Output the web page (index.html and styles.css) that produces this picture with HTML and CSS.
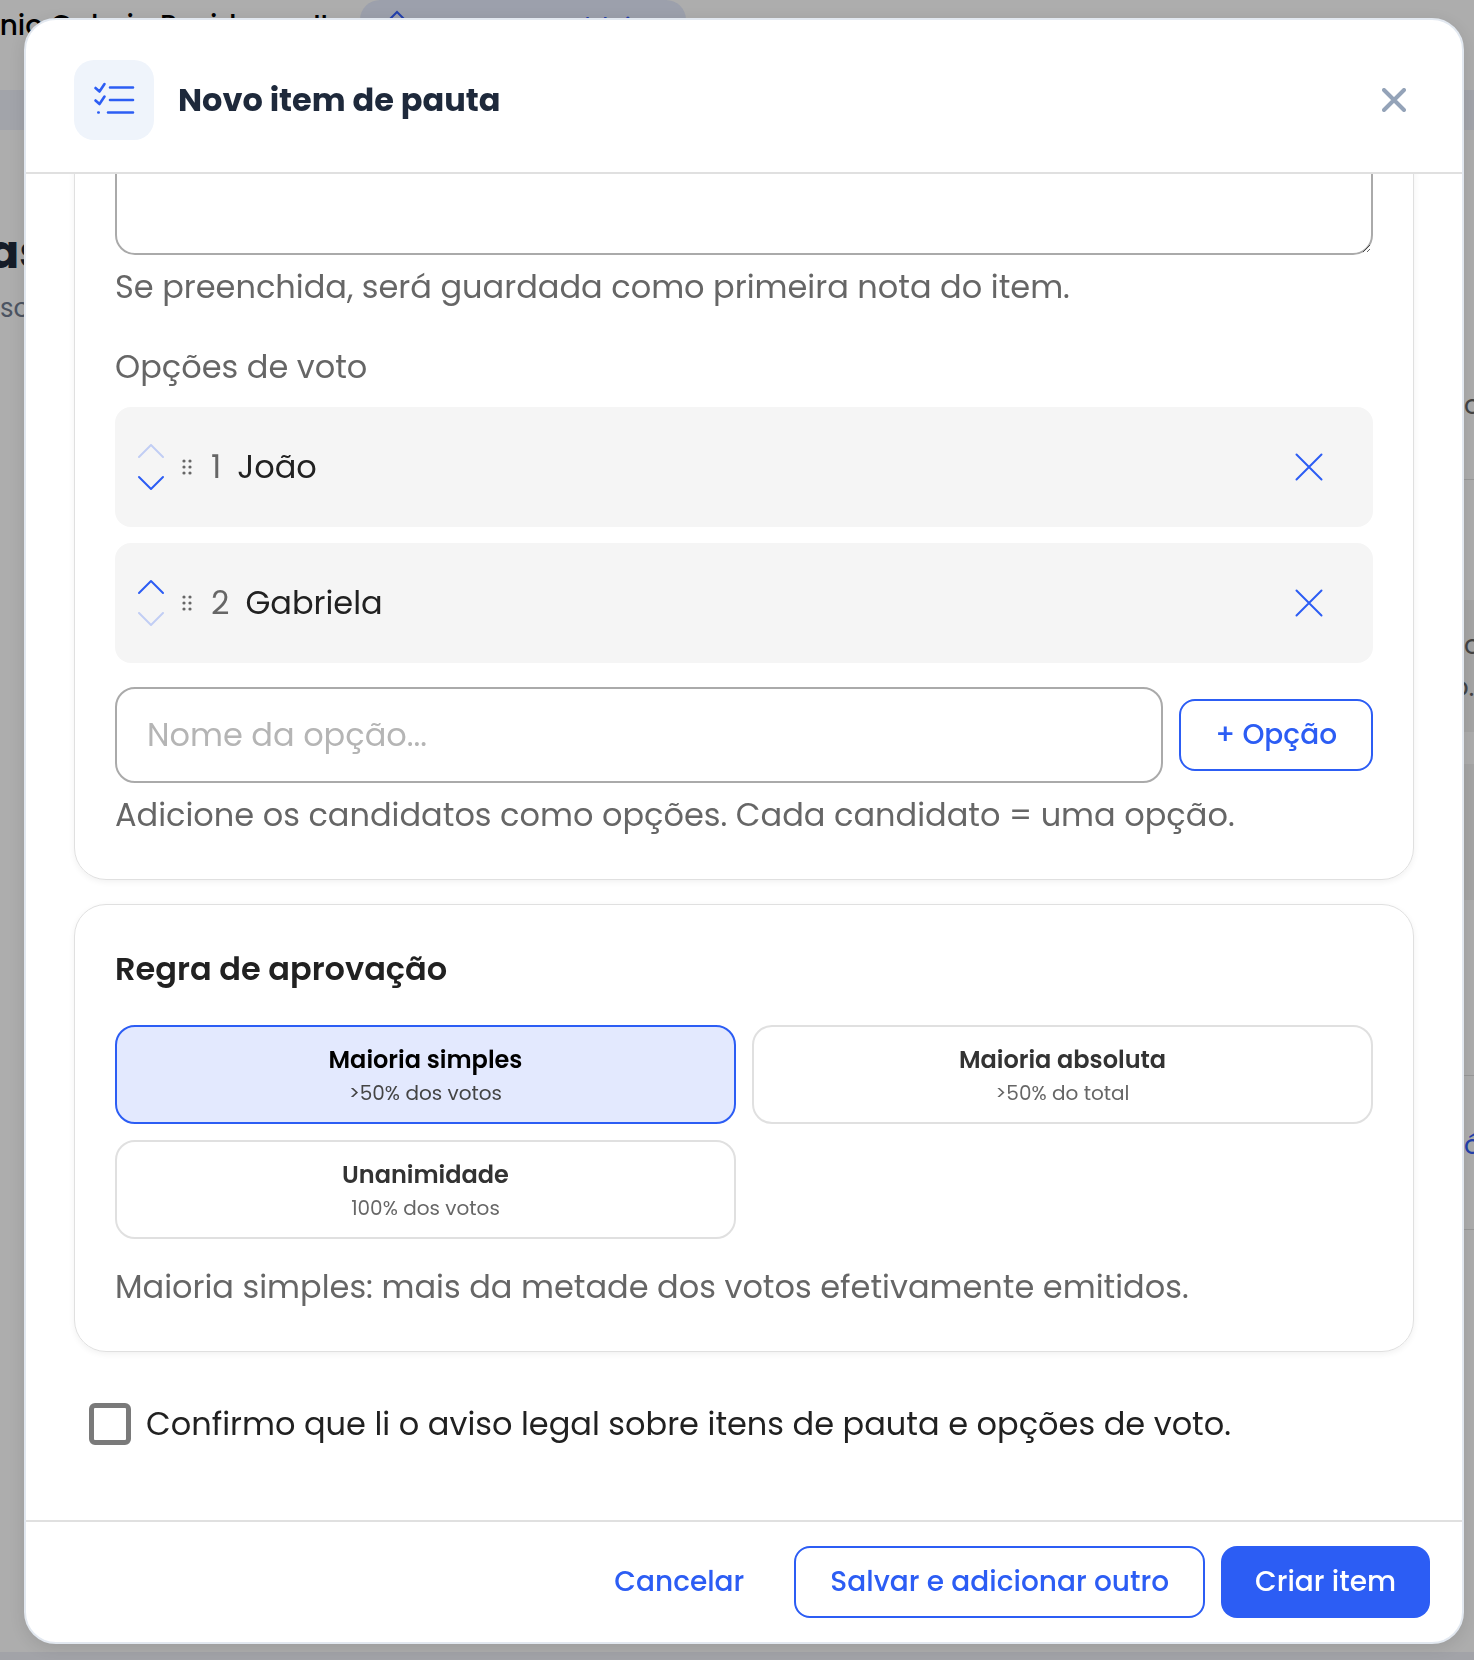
FILE: index.html
```html
<!DOCTYPE html>
<html lang="pt-BR">
<head>
<meta charset="utf-8">
<meta name="viewport" content="width=device-width, initial-scale=1">
<title>Novo item de pauta</title>
<link rel="stylesheet" href="styles.css">
</head>
<body>
<div class="page">
  <header class="topbar">
    <span class="topbar-name">ínio Galeria Residence II</span>
    <a class="topbar-chip" href="#">
      <svg width="36" height="36" viewBox="0 0 36 36" fill="none" stroke="currentColor" stroke-width="2"><path d="M3 17 18 2l15 15M8 13v20h20V13"/></svg>
      <span>Assembleias</span>
    </a>
  </header>
  <div class="band"></div>
  <div class="page-intro">
    <h1 class="page-title">as</h1>
    <p class="page-sub">sc</p>
  </div>
  <div class="page-side">
    <div class="side-cell side-first">o</div>
    <div class="side-cell side-mid"></div>
    <div class="side-cell side-shade"><p>o</p><p class="side-end">o.</p></div>
    <div class="side-cell side-gap"></div>
    <div class="side-cell side-low"></div>
    <div class="side-cell side-blank"></div>
    <div class="side-cell side-link"><a href="#">ó</a></div>
  </div>
  <div class="band-bottom"></div>
</div>

<div class="overlay">
  <form class="dialog" role="dialog" aria-labelledby="dialog-title">
    <header class="dialog-header">
      <span class="header-icon">
        <svg width="48" height="48" viewBox="0 0 48 48" fill="none" stroke="currentColor" stroke-width="2.6" stroke-linecap="round" stroke-linejoin="round"><path d="M20 11.5h23M20 24h23M18 36.500h25M5.500 12l4 3.500L14.500 8M5.500 24.500l4 3.500 5-7.500M8.300 36.500h.4"/></svg>
      </span>
      <h2 class="dialog-title" id="dialog-title">Novo item de pauta</h2>
      <button class="close" type="button" aria-label="Fechar">
        <svg width="24" height="24" viewBox="0 0 24 24" fill="none" stroke="currentColor" stroke-width="4" stroke-linecap="round"><path d="m2 2 20 20M22 2 2 22"/></svg>
      </button>
    </header>

    <div class="dialog-body">
      <section class="card">
        <textarea class="field note" aria-label="Nota"></textarea>
        <p class="hint note-hint">Se preenchida, será guardada como primeira nota do item.</p>
        <h3 class="label">Opções de voto</h3>
        <ul class="options">
          <li class="option">
            <div class="move">
              <button type="button" aria-label="Mover para cima" disabled><svg width="28" height="16" viewBox="0 0 28 16"><path d="M2 14 14 2l12 12"/></svg></button>
              <button type="button" aria-label="Mover para baixo"><svg width="28" height="16" viewBox="0 0 28 16"><path d="m2 2 12 12L26 2"/></svg></button>
            </div>
            <svg class="grip" width="16" height="16" viewBox="0 0 16 16"><circle cx="5" cy="2" r="1.6"/><circle cx="11" cy="2" r="1.6"/><circle cx="5" cy="8" r="1.6"/><circle cx="11" cy="8" r="1.6"/><circle cx="5" cy="14" r="1.6"/><circle cx="11" cy="14" r="1.6"/></svg>
            <span class="number">1</span>
            <span class="name">João</span>
            <button class="remove" type="button" aria-label="Remover João"><svg width="28" height="28" viewBox="0 0 28 28"><path d="m1.500 1.500 25 25M26.500 1.500l-25 25"/></svg></button>
          </li>
          <li class="option">
            <div class="move">
              <button type="button" aria-label="Mover para cima"><svg width="28" height="16" viewBox="0 0 28 16"><path d="M2 14 14 2l12 12"/></svg></button>
              <button type="button" aria-label="Mover para baixo" disabled><svg width="28" height="16" viewBox="0 0 28 16"><path d="m2 2 12 12L26 2"/></svg></button>
            </div>
            <svg class="grip" width="16" height="16" viewBox="0 0 16 16"><circle cx="5" cy="2" r="1.6"/><circle cx="11" cy="2" r="1.6"/><circle cx="5" cy="8" r="1.6"/><circle cx="11" cy="8" r="1.6"/><circle cx="5" cy="14" r="1.6"/><circle cx="11" cy="14" r="1.6"/></svg>
            <span class="number">2</span>
            <span class="name">Gabriela</span>
            <button class="remove" type="button" aria-label="Remover Gabriela"><svg width="28" height="28" viewBox="0 0 28 28"><path d="m1.500 1.500 25 25M26.500 1.500l-25 25"/></svg></button>
          </li>
        </ul>
        <div class="add-row">
          <input class="field add-input" type="text" placeholder="Nome da opção..." aria-label="Nome da opção">
          <button class="btn btn-outline" type="button">+ Opção</button>
        </div>
        <p class="hint">Adicione os candidatos como opções. Cada candidato = uma opção.</p>
      </section>

      <section class="card">
        <h3 class="card-title">Regra de aprovação</h3>
        <div class="rules">
          <button class="rule rule-selected" type="button" aria-pressed="true"><strong>Maioria simples</strong><span>&gt;50% dos votos</span></button>
          <button class="rule" type="button" aria-pressed="false"><strong>Maioria absoluta</strong><span>&gt;50% do total</span></button>
          <button class="rule" type="button" aria-pressed="false"><strong>Unanimidade</strong><span>100% dos votos</span></button>
        </div>
        <p class="hint">Maioria simples: mais da metade dos votos efetivamente emitidos.</p>
      </section>

      <label class="confirm"><input type="checkbox"><span>Confirmo que li o aviso legal sobre itens de pauta e opções de voto.</span></label>
    </div>

    <footer class="dialog-footer">
      <button class="btn btn-text" type="button">Cancelar</button>
      <button class="btn btn-outline" type="button">Salvar e adicionar outro</button>
      <button class="btn btn-primary" type="submit">Criar item</button>
    </footer>
  </form>
</div>
</body>
</html>
```
FILE: styles.css
```css
:root {
  --blue: #2c5df4;
  --ink: #212121;
  --muted: #666;
  --line: #e0e0e0;
}

* { box-sizing: border-box; }

body {
  margin: 0;
  height: 100vh;
  overflow: hidden;
  font-family: Poppins, Inter, sans-serif;
  font-size: 32px;
  line-height: 48px;
  color: var(--ink);
  background: #adadad;
}

h1, h2, h3, p, ul { margin: 0; padding: 0; }
ul { list-style: none; }
button, input, textarea { font: inherit; }
button { cursor: pointer; }

/* Page behind the dialog */
.page {
  display: grid;
  grid-template-columns: 1fr 24px;
  grid-template-rows: 90px 40px 1fr 8px;
  height: 100vh;
}
.topbar, .band, .band-bottom { grid-column: 1 / -1; }
.topbar {
  display: flex;
  align-items: flex-start;
  gap: 32px;
  overflow: hidden;
  white-space: nowrap;
}
.topbar-name {
  display: flex;
  justify-content: flex-end;
  width: 328px;
  font-size: 28px;
  line-height: 52px;
  font-weight: 500;
  color: #000;
}
.topbar-chip {
  display: flex;
  align-items: center;
  justify-content: space-between;
  width: 326px;
  height: 56px;
  padding: 0 24px 0 19px;
  border-radius: 20px;
  background: #9ca0ac;
  color: #2340ac;
  font-size: 26px;
  text-decoration: none;
}
.band { background: #a2a4aa; }
.band-bottom { background: #a2a3a8; }
.page-intro { padding-top: 90px; }
.page-title {
  margin-left: -12px;
  font-size: 46px;
  line-height: 64px;
  color: #151c28;
}
.page-sub {
  font-size: 26px;
  color: #4c5462;
}
.page-side {
  display: flex;
  flex-direction: column;
  padding-top: 254px;
  font-size: 26px;
  line-height: 42px;
  color: #444;
}
.side-cell { padding-left: 14px; border-bottom: 1px solid #999; }
.side-first { height: 96px; }
.side-mid { height: 120px; border: 0; }
.side-shade { height: 132px; padding-top: 24px; background: #a5a5a5; border: 0; }
.side-end { margin-left: -12px; }
.side-gap { height: 32px; border: 0; }
.side-low { height: 136px; background: #a5a5a5; border: 0; }
.side-blank { height: 176px; }
.side-link { height: 154px; padding-top: 48px; }
.side-link a { color: #2340ac; text-decoration: none; }

/* Dialog */
.overlay {
  position: fixed;
  inset: 0;
  display: flex;
  padding: 18px 10px 16px 24px;
}
.dialog {
  flex: 1;
  display: flex;
  flex-direction: column;
  overflow: hidden;
  border: 2px solid #e2e8f0;
  border-radius: 32px;
  background: #fff;
  box-shadow: 0 4px 16px rgba(0, 0, 0, .1);
}
.dialog-header {
  display: flex;
  align-items: center;
  gap: 24px;
  flex: none;
  padding: 40px 48px 32px;
  border-bottom: 2px solid var(--line);
}
.header-icon {
  display: grid;
  place-items: center;
  width: 80px;
  height: 80px;
  border-radius: 20px;
  background: #eff4fb;
  color: var(--blue);
}
.dialog-title {
  flex: 1;
  font-size: 32px;
  font-weight: 700;
  color: #1e293b;
}
.close {
  display: grid;
  place-items: center;
  width: 40px;
  height: 40px;
  padding: 0;
  border: 0;
  background: none;
  color: #94a3b8;
}

.dialog-body {
  flex: 1;
  display: flex;
  flex-direction: column;
  justify-content: flex-end;
  gap: 24px;
  min-height: 0;
  overflow: hidden;
  padding: 0 48px 48px;
}
.card {
  flex: none;
  padding: 40px;
  border: 1px solid var(--line);
  border-radius: 32px;
  box-shadow: 0 2px 6px rgba(0, 0, 0, .06);
}
.field {
  display: block;
  width: 100%;
  border: 2px solid #aaa;
  border-radius: 20px;
  background: #fff;
  color: var(--ink);
}
.note { height: 192px; padding: 24px 30px; resize: vertical; }
.hint { margin-top: 8px; color: var(--muted); }
.note-hint { margin-bottom: 32px; }
.label {
  margin-bottom: 16px;
  font-size: 32px;
  font-weight: 400;
  color: var(--muted);
}

.options { display: grid; gap: 16px; }
.option {
  display: flex;
  align-items: center;
  height: 120px;
  padding: 0 16px;
  border-radius: 16px;
  background: #f5f5f5;
}
.option button {
  display: grid;
  place-items: center;
  padding: 0;
  border: 0;
  background: none;
}
.option button svg {
  fill: none;
  stroke: var(--blue);
  stroke-width: 2;
  stroke-linecap: round;
  stroke-linejoin: round;
}
.move button { width: 40px; height: 32px; }
.move button:disabled { opacity: .25; }
.grip { margin: 0 16px 0 8px; fill: var(--muted); }
.number { margin-right: 16px; color: var(--muted); }
.name { flex: 1; }
.option .remove { width: 96px; height: 64px; }

.add-row {
  display: flex;
  align-items: center;
  gap: 16px;
  margin-top: 24px;
}
.add-input { flex: 1; min-width: 0; height: 96px; padding: 0 30px; }
.add-input::placeholder { color: #b5b5b5; }

.btn {
  height: 72px;
  padding: 0 32px;
  border: 2px solid transparent;
  border-radius: 16px;
  background: none;
  color: var(--blue);
  font-size: 28px;
  font-weight: 500;
  white-space: nowrap;
}
.btn-outline { padding: 0 34px; border-color: var(--blue); }
.btn-primary { background: var(--blue); color: #fff; }

.card-title { font-size: 32px; font-weight: 600; }
.rules {
  display: grid;
  grid-template-columns: 1fr 1fr;
  gap: 16px;
  margin: 32px 0 24px;
}
.rule {
  display: flex;
  flex-direction: column;
  align-items: center;
  justify-content: center;
  height: 99px;
  padding: 0;
  border: 2px solid var(--line);
  border-radius: 20px;
  background: #fff;
  color: #333;
}
.rule strong { font-size: 24px; line-height: 36px; font-weight: 600; }
.rule span { font-size: 20px; line-height: 30px; color: var(--muted); }
.rule-selected { border-color: var(--blue); background: #e3e9fe; color: #000; }
.rule-selected span { color: #444; }

.confirm {
  flex: none;
  display: flex;
  align-items: center;
  gap: 15px;
  height: 96px;
  padding-left: 15px;
}
.confirm input {
  appearance: none;
  width: 42px;
  height: 42px;
  margin: 0;
  border: 5px solid #7a7a7a;
  border-radius: 6px;
}

.dialog-footer {
  flex: none;
  display: flex;
  justify-content: flex-end;
  gap: 16px;
  padding: 24px 32px;
  border-top: 2px solid var(--line);
}
```
